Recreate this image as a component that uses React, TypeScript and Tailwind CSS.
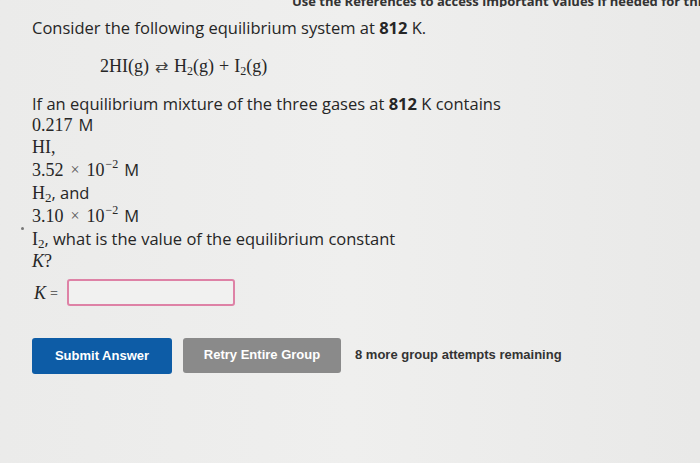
import React from "react";

const Sans = "font-['Open_Sans',sans-serif]";
const Serif = "font-['Liberation_Serif',serif]";

const Conc: React.FC<{ value: string; exp?: string; className?: string }> = ({ value, exp, className = "h-[23px]" }) => (
  <div className={`flex items-center leading-[18px] ${className}`}>
    <span className={`${Serif} text-[18px]`}>{value}</span>
    {exp && (
      <>
        <span className={`${Serif} text-[16px] mx-[7px] text-[#555]`}>×</span>
        <span className={`${Serif} text-[18px]`}>10</span>
        <span className={`${Serif} text-[12px] -translate-y-[6px] ml-[1px]`}>{exp}</span>
      </>
    )}
    <span className={`${Sans} text-[16.5px] ml-[6px]`}>M</span>
  </div>
);

export default function App() {
  return (
    <div className="w-[700px] h-[463px] overflow-hidden bg-gradient-to-r from-[#ebebea] via-[#efefee] to-[#e9e9e8] text-[#262626] relative">
      {/* cut-off reference line at the top */}
      <div className="h-[7px] overflow-hidden">
        <div className={`${Sans} font-bold text-[13px] leading-[14px] -mt-[6px] ml-[292px] whitespace-nowrap text-[#333]`}>
          Use the References to access important values if needed for this question.
        </div>
      </div>

      <div className={`${Sans} px-[32px] text-[16.5px]`}>
        <p className="mt-[10px] leading-[22px]">
          Consider the following equilibrium system at <b>812</b> K.
        </p>

        <div className={`${Serif} text-[18px] mt-[16px] ml-[68px] flex items-baseline leading-[22px]`}>
          <span>2HI(g)</span>
          <span className="mx-[6px] text-[16px] text-[#444]">⇄</span>
          <span>H</span>
          <sub className="text-[12px]">2</sub>
          <span>(g)</span>
          <span className="mx-[5px]">+</span>
          <span>I</span>
          <sub className="text-[12px]">2</sub>
          <span>(g)</span>
        </div>

        <p className="mt-[16px] leading-[20px]">
          If an equilibrium mixture of the three gases at <b>812</b> K contains
        </p>
        <Conc value="0.217" className="h-[21px]" />
        <div className="h-[23px] flex items-center leading-[18px]">
          <span className={`${Serif} text-[18px]`}>HI,</span>
        </div>
        <Conc value="3.52" exp="−2" />
        <div className="h-[23px] flex items-baseline pt-[3px] leading-[18px]">
          <span className={`${Serif} text-[18px]`}>H</span>
          <sub className={`${Serif} text-[13px] leading-none`}>2</sub>
          <span>, and</span>
        </div>
        <Conc value="3.10" exp="−2" />
        <div className="h-[23px] flex items-baseline pt-[3px] leading-[18px]">
          <span className={`${Serif} text-[18px]`}>I</span>
          <sub className={`${Serif} text-[13px] leading-none`}>2</sub>
          <span>, what is the value of the equilibrium constant</span>
        </div>
        <div className="h-[21px] flex items-center leading-[18px]">
          <span className={`${Serif} italic text-[18px]`}>K</span>
          <span className={`${Serif} text-[18px]`}>?</span>
        </div>

        <div className="mt-[8px] flex items-center leading-[18px]">
          <span className={`${Serif} italic text-[18px] ml-[2px]`}>K</span>
          <span className="text-[14px] ml-[4px] text-[#666]">=</span>
          <div className="ml-[9px] w-[168px] h-[27px] rounded-[3px] border-2 border-[#de82a6] bg-[#f1f1f0]" />
        </div>

        <div className="mt-[32px] flex items-center font-['Liberation_Sans',sans-serif] font-bold text-[13px]">
          <button className="w-[140px] h-[36px] rounded-[3px] bg-[#0d5ca6] text-white">
            Submit Answer
          </button>
          <button className="ml-[11px] w-[158px] h-[35px] -mt-[2px] rounded-[3px] bg-[#8a8a8a] text-white">
            Retry Entire Group
          </button>
          <span className="ml-[14px] -mt-[2px] text-[#333]">8 more group attempts remaining</span>
        </div>
      </div>

      {/* stray mark on the photographed screen */}
      <div className="absolute left-[21px] top-[227px] w-[3px] h-[3px] rounded-full bg-[#777]" />
    </div>
  );
}
